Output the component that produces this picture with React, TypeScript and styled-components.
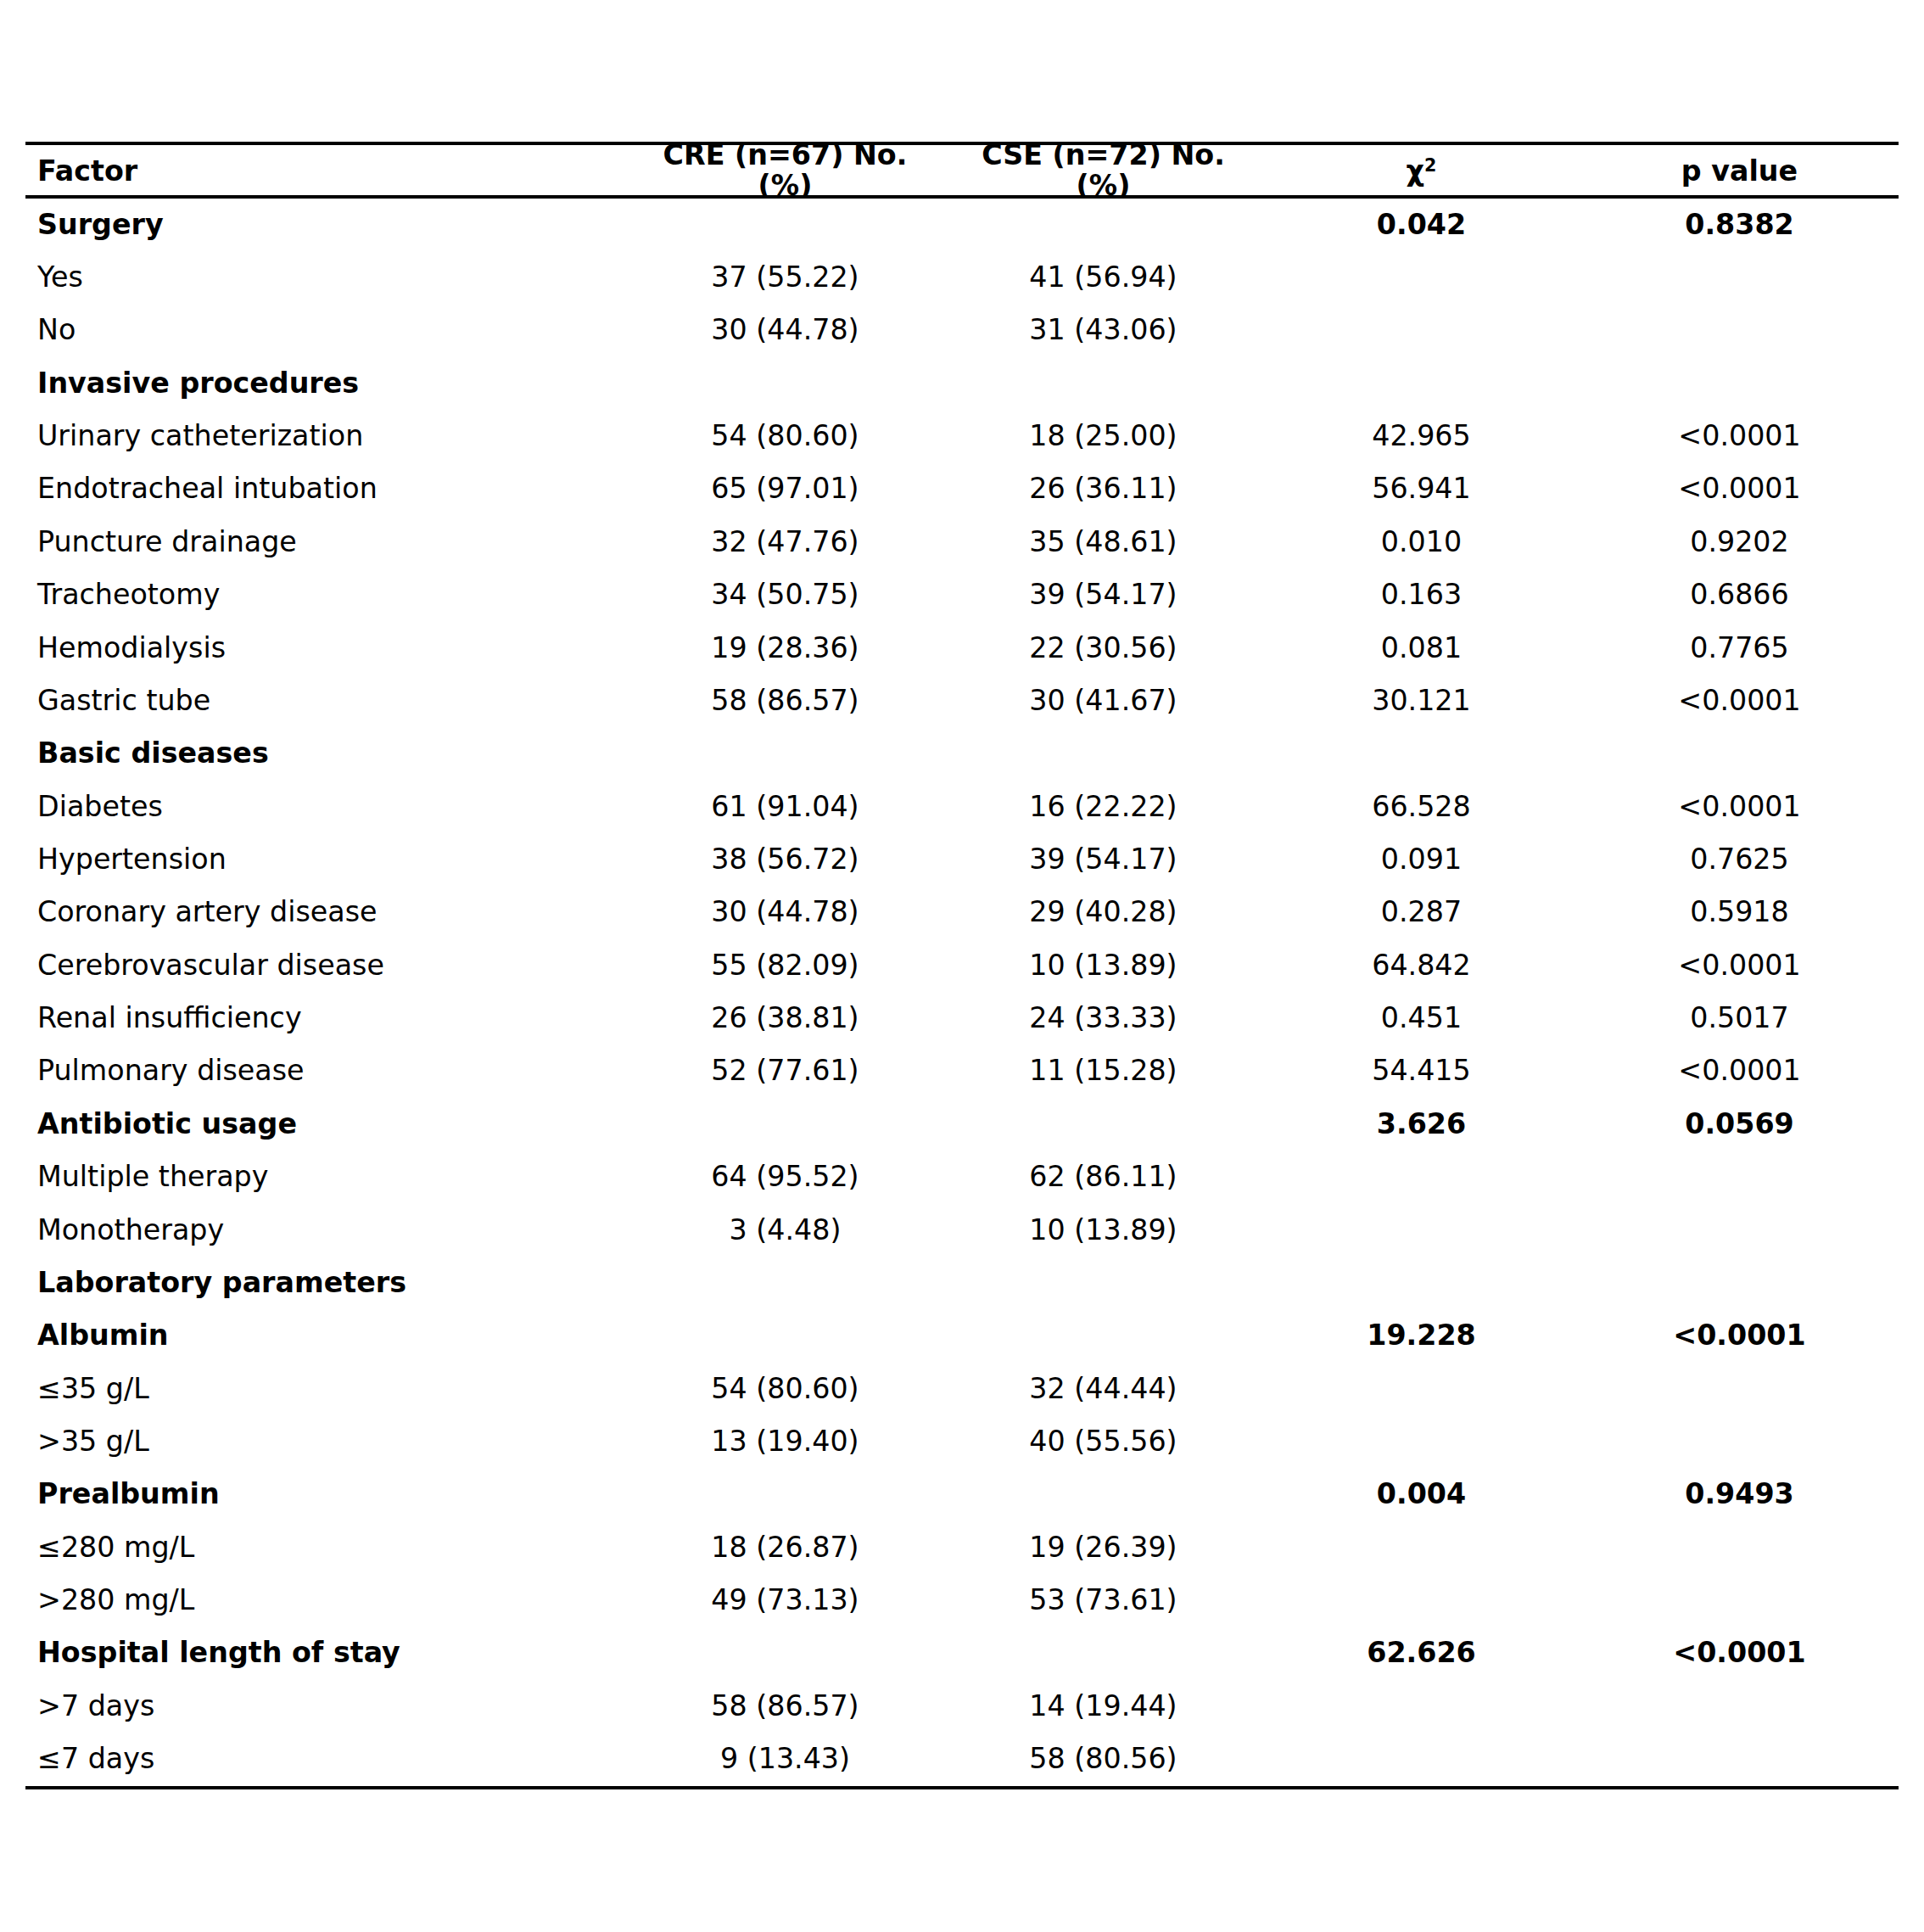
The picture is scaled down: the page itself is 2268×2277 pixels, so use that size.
import React from "react";
import styled, { createGlobalStyle } from "styled-components";

const Global = createGlobalStyle`
  html, body { margin: 0; padding: 0; background: #ffffff; }
  body { font-family: "DejaVu Sans", "Liberation Sans", sans-serif; color: #000; }
`;

const Page = styled.div`
  width: 2268px;
  height: 2277px;
  padding: 167px 0 0 30px;
  box-sizing: border-box;
`;

const Table = styled.div`
  width: 2208px;
  font-size: 33.3px;
  border-top: 4px solid #000;
  border-bottom: 4px solid #000;
`;

const cols = "708px 375px 375px 375px 375px";

const HeadRow = styled.div`
  display: grid;
  grid-template-columns: ${cols};
  height: 59px;
  border-bottom: 4px solid #000;
`;

const Th = styled.div<{ $align?: "left" | "center"; $multi?: boolean }>`
  height: 59px;
  overflow: hidden;
  display: flex;
  flex-direction: column;
  justify-content: center;
  align-items: ${(p) => (p.$align === "left" ? "flex-start" : "center")};
  padding-left: ${(p) => (p.$align === "left" ? "14px" : "0")};
  padding-top: 1px;
  box-sizing: border-box;
  font-weight: bold;
  line-height: ${(p) => (p.$multi ? "36px" : "39px")};
  white-space: nowrap;
  text-align: center;
`;

const HeadLine = styled.span`
  display: block;
  flex-shrink: 0;
`;

const Sup = styled.span`
  font-size: 0.62em;
  vertical-align: 0.55em;
  line-height: 0;
`;

const Row = styled.div`
  display: grid;
  grid-template-columns: ${cols};
  height: 62.37px;
  align-items: center;
`;

const Cell = styled.div<{ $bold?: boolean; $first?: boolean }>`
  font-weight: ${(p) => (p.$bold ? "bold" : "normal")};
  text-align: ${(p) => (p.$first ? "left" : "center")};
  padding-left: ${(p) => (p.$first ? "14px" : "0")};
  padding-bottom: 2px;
  white-space: nowrap;
`;

type R = [string, string, string, string, string, boolean?];

const rows: R[] = [
  ["Surgery", "", "", "0.042", "0.8382", true],
  ["Yes", "37 (55.22)", "41 (56.94)", "", ""],
  ["No", "30 (44.78)", "31 (43.06)", "", ""],
  ["Invasive procedures", "", "", "", "", true],
  ["Urinary catheterization", "54 (80.60)", "18 (25.00)", "42.965", "<0.0001"],
  ["Endotracheal intubation", "65 (97.01)", "26 (36.11)", "56.941", "<0.0001"],
  ["Puncture drainage", "32 (47.76)", "35 (48.61)", "0.010", "0.9202"],
  ["Tracheotomy", "34 (50.75)", "39 (54.17)", "0.163", "0.6866"],
  ["Hemodialysis", "19 (28.36)", "22 (30.56)", "0.081", "0.7765"],
  ["Gastric tube", "58 (86.57)", "30 (41.67)", "30.121", "<0.0001"],
  ["Basic diseases", "", "", "", "", true],
  ["Diabetes", "61 (91.04)", "16 (22.22)", "66.528", "<0.0001"],
  ["Hypertension", "38 (56.72)", "39 (54.17)", "0.091", "0.7625"],
  ["Coronary artery disease", "30 (44.78)", "29 (40.28)", "0.287", "0.5918"],
  ["Cerebrovascular disease", "55 (82.09)", "10 (13.89)", "64.842", "<0.0001"],
  ["Renal insufficiency", "26 (38.81)", "24 (33.33)", "0.451", "0.5017"],
  ["Pulmonary disease", "52 (77.61)", "11 (15.28)", "54.415", "<0.0001"],
  ["Antibiotic usage", "", "", "3.626", "0.0569", true],
  ["Multiple therapy", "64 (95.52)", "62 (86.11)", "", ""],
  ["Monotherapy", "3 (4.48)", "10 (13.89)", "", ""],
  ["Laboratory parameters", "", "", "", "", true],
  ["Albumin", "", "", "19.228", "<0.0001", true],
  ["≤35 g/L", "54 (80.60)", "32 (44.44)", "", ""],
  [">35 g/L", "13 (19.40)", "40 (55.56)", "", ""],
  ["Prealbumin", "", "", "0.004", "0.9493", true],
  ["≤280 mg/L", "18 (26.87)", "19 (26.39)", "", ""],
  [">280 mg/L", "49 (73.13)", "53 (73.61)", "", ""],
  ["Hospital length of stay", "", "", "62.626", "<0.0001", true],
  [">7 days", "58 (86.57)", "14 (19.44)", "", ""],
  ["≤7 days", "9 (13.43)", "58 (80.56)", "", ""],
];

export default function App() {
  return (
    <Page>
      <Global />
      <Table>
        <HeadRow>
          <Th $align="left">
            <HeadLine>Factor</HeadLine>
          </Th>
          <Th $multi>
            <HeadLine>CRE (n=67) No.</HeadLine>
            <HeadLine>(%)</HeadLine>
          </Th>
          <Th $multi>
            <HeadLine>CSE (n=72) No.</HeadLine>
            <HeadLine>(%)</HeadLine>
          </Th>
          <Th>
            <HeadLine>
              χ<Sup>2</Sup>
            </HeadLine>
          </Th>
          <Th>
            <HeadLine>p value</HeadLine>
          </Th>
        </HeadRow>
        {rows.map((r, i) => (
          <Row key={i}>
            <Cell $first $bold={r[5]}>{r[0]}</Cell>
            <Cell>{r[1]}</Cell>
            <Cell>{r[2]}</Cell>
            <Cell $bold={r[5]}>{r[3]}</Cell>
            <Cell $bold={r[5]}>{r[4]}</Cell>
          </Row>
        ))}
      </Table>
    </Page>
  );
}
